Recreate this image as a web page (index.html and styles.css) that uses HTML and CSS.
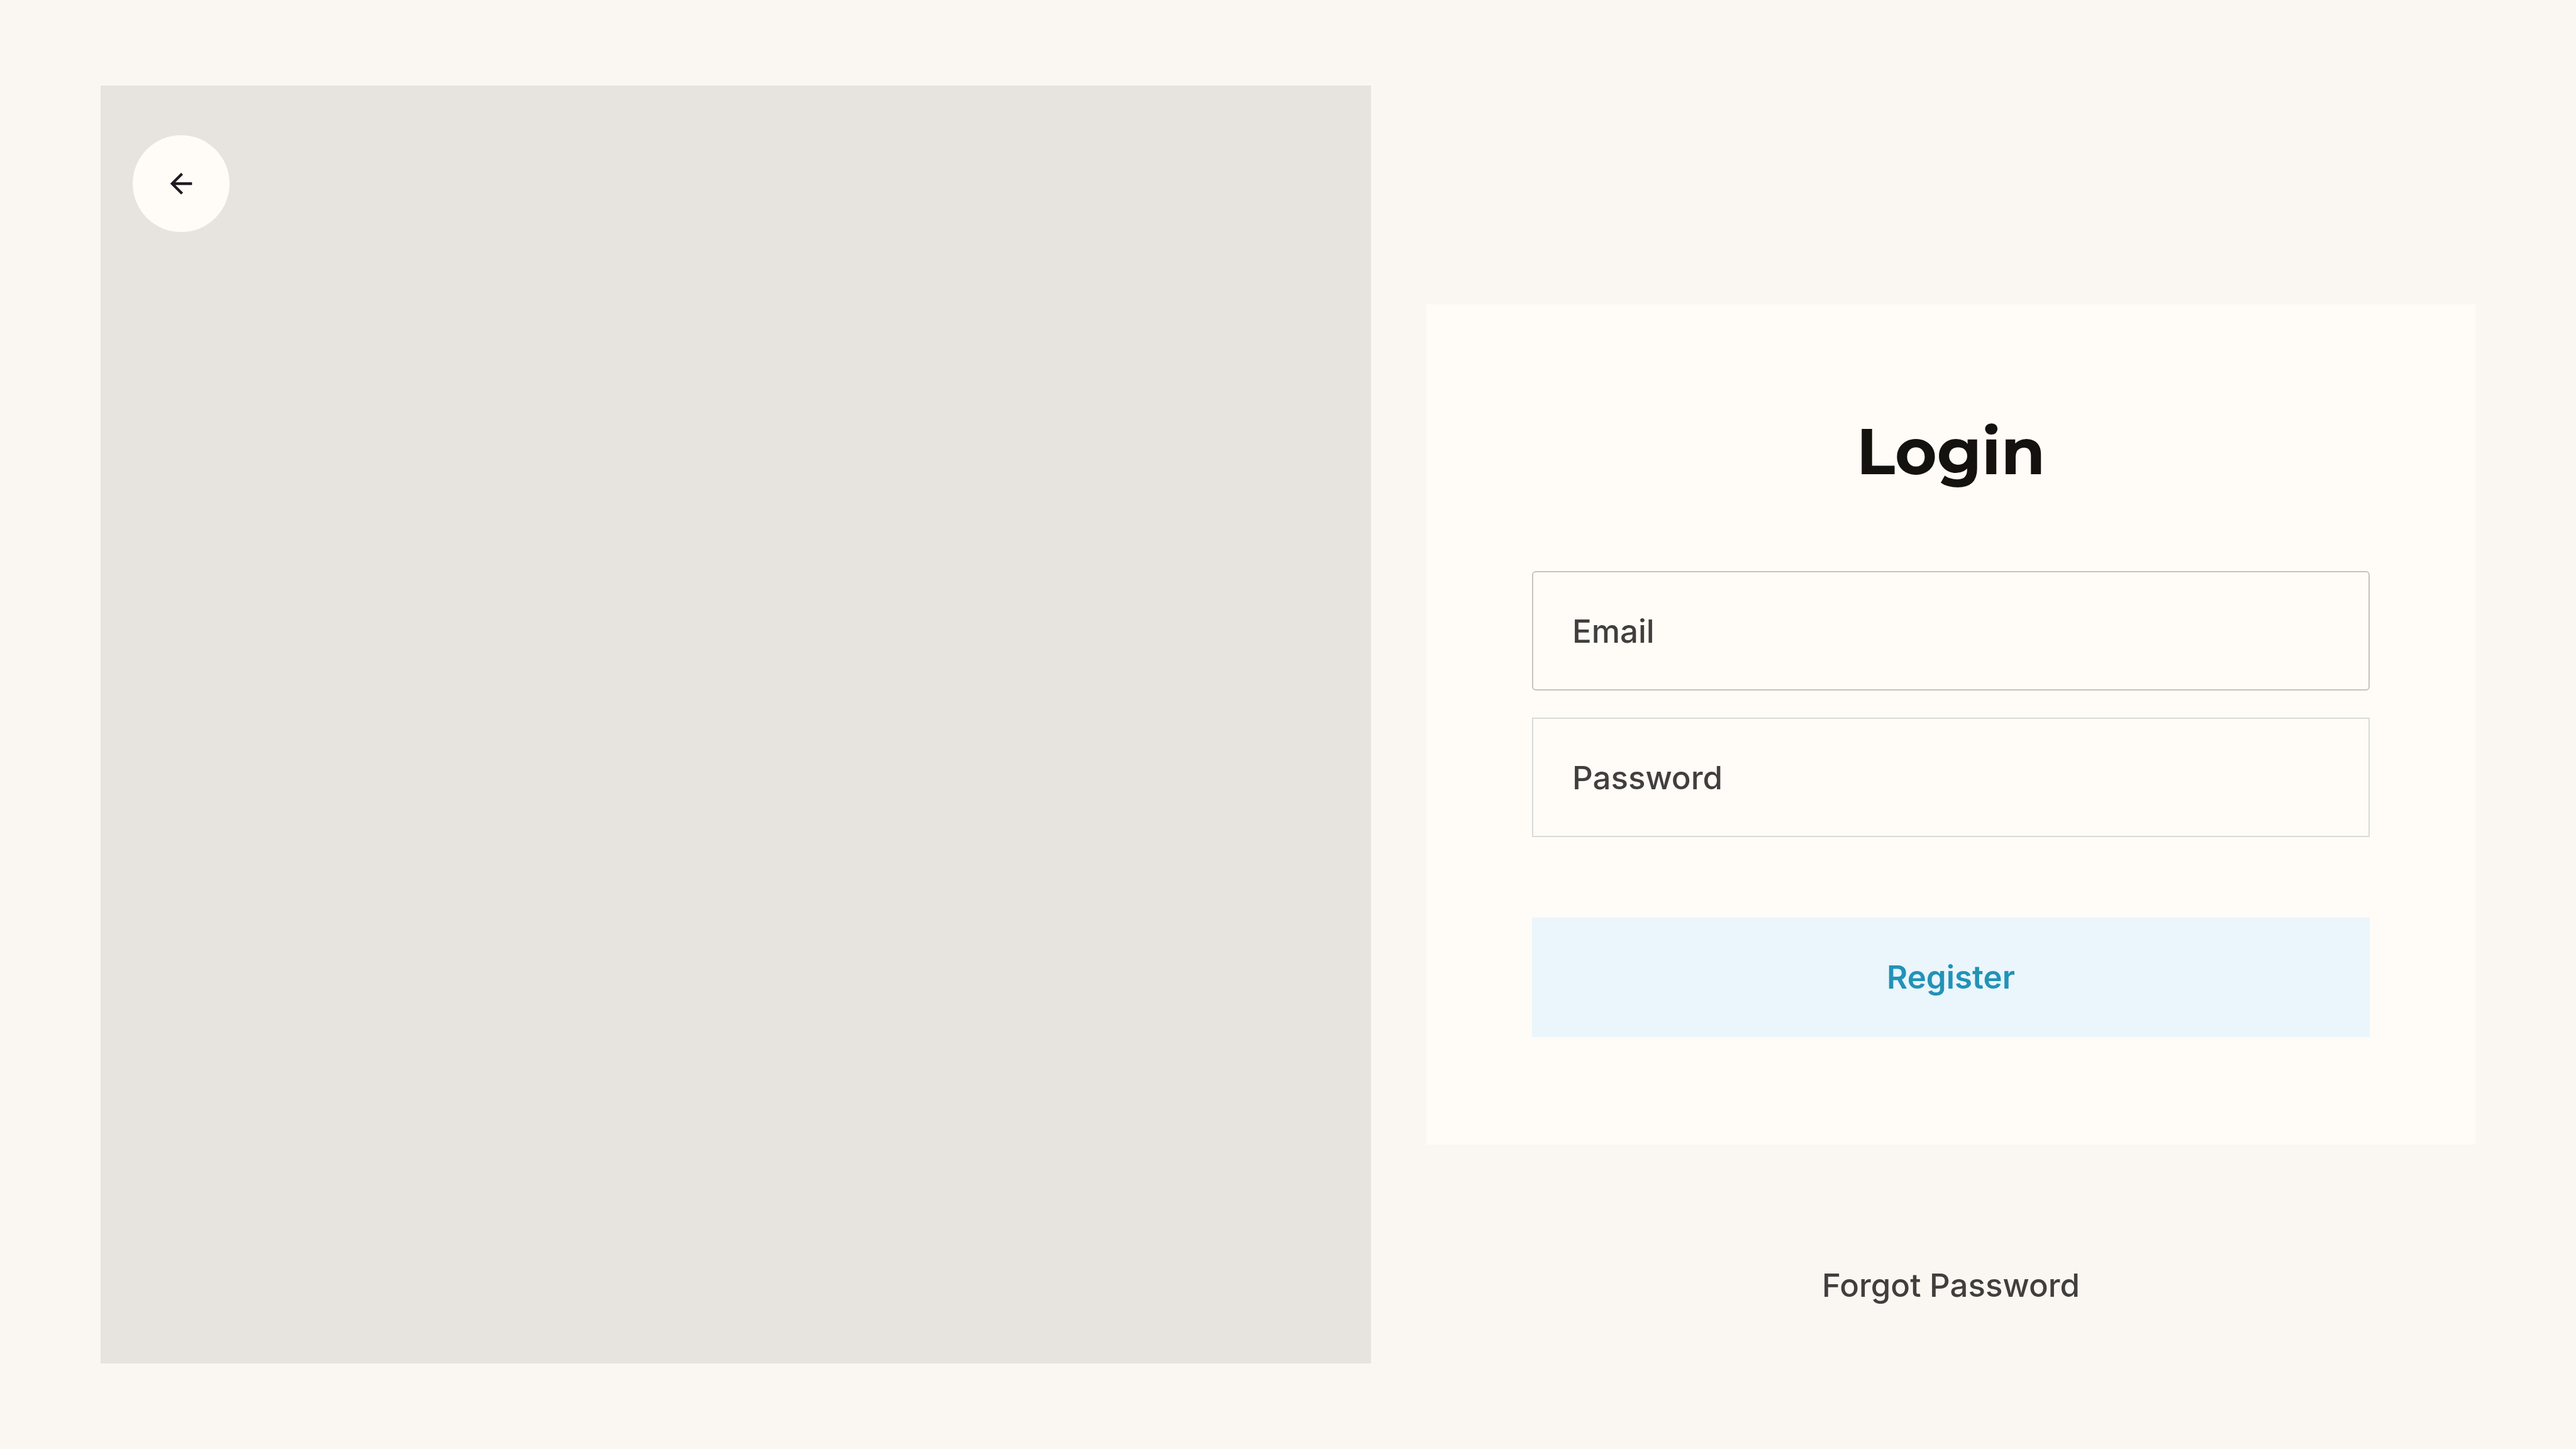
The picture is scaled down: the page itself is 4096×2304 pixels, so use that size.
FILE: index.html
```html
<!DOCTYPE html>
<html lang="en">
<head>
  <meta charset="utf-8">
  <meta name="viewport" content="width=device-width, initial-scale=1">
  <title>Login</title>
  <link rel="stylesheet" href="styles.css">
</head>
<body>
  <main class="page">
    <section class="cover">
      <button class="back" type="button" aria-label="Back">
        <svg class="back-icon" viewBox="0 0 24 24" aria-hidden="true">
          <path d="M7.825 13L13.425 18.6L12 20L4 12L12 4L13.425 5.4L7.825 11H20V13H7.825Z" fill="currentColor"/>
        </svg>
      </button>
    </section>
    <section class="panel">
      <form class="card">
        <h1 class="title">Login</h1>
        <div class="fields">
          <input class="field field-active" type="email" name="email" placeholder="Email" aria-label="Email">
          <input class="field" type="password" name="password" placeholder="Password" aria-label="Password">
        </div>
        <button class="submit" type="submit">Register</button>
      </form>
      <a class="forgot" href="#forgot">Forgot Password</a>
    </section>
  </main>
</body>
</html>
```
FILE: styles.css
```css
* {
  box-sizing: border-box;
}

body {
  margin: 0;
  background: #faf7f2;
  color: #403f3d;
  font-family: Inter, "Liberation Sans", sans-serif;
  font-size: 51px;
  font-weight: 500;
  line-height: 62px;
}

.page {
  display: grid;
  grid-template-columns: 2020fr 1668fr;
  column-gap: 88px;
  min-height: 100vh;
  padding: 136px 160px;
}

.cover {
  padding: 79px 51px;
  background: #e7e4df;
}

.back {
  display: flex;
  align-items: center;
  justify-content: center;
  width: 154px;
  height: 154px;
  padding: 0;
  border: 0;
  border-radius: 50%;
  background: #fffcf7;
  color: #1d1b20;
}

.back-icon {
  width: 52px;
  height: 52px;
}

/* The card stays centred; the link hangs in the space below it. */
.panel {
  display: grid;
  grid-template-rows: 1fr auto 1fr;
  justify-items: center;
}

.card {
  display: flex;
  flex-direction: column;
  gap: 128px;
  grid-row: 2;
  width: 100%;
  padding: 171px 168px;
  background: #fffcf7;
}

.title {
  margin: 0;
  color: #13120e;
  font-family: Montserrat, Inter, sans-serif;
  font-size: 102px;
  font-weight: 700;
  line-height: 125px;
  text-align: center;
}

.fields {
  display: flex;
  flex-direction: column;
  gap: 43px;
}

.field {
  width: 100%;
  height: 190px;
  padding: 0 62px;
  border: 2px solid #d9dad9;
  border-radius: 0;
  background: transparent;
  color: #403f3d;
  font: inherit;
}

.field-active {
  border-color: #cac2ba;
  border-radius: 6px;
}

.field::placeholder {
  color: #403f3d;
  opacity: 1;
}

.submit {
  height: 190px;
  padding: 0;
  border: 0;
  background: #eaf6fb;
  color: #2392b8;
  font: inherit;
  font-weight: 600;
}

.forgot {
  grid-row: 3;
  align-self: start;
  margin-top: 193px;
  color: #403f3d;
  text-decoration: none;
}
```
